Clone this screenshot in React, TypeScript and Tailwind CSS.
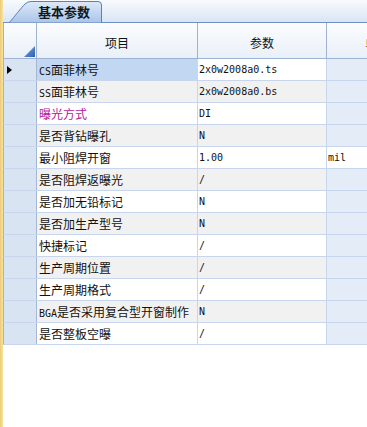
import React from "react";

type Row = { latin?: string; label: string; value: string; unit?: string; magenta?: boolean };

const rows: Row[] = [
  { latin: "CS", label: "面菲林号", value: "2x0w2008a0.ts" },
  { latin: "SS", label: "面菲林号", value: "2x0w2008a0.bs" },
  { label: "曝光方式", value: "DI", magenta: true },
  { label: "是否背钻曝孔", value: "N" },
  { label: "最小阻焊开窗", value: "1.00", unit: "mil" },
  { label: "是否阻焊返曝光", value: "/" },
  { label: "是否加无铅标记", value: "N" },
  { label: "是否加生产型号", value: "N" },
  { label: "快捷标记", value: "/" },
  { label: "生产周期位置", value: "/" },
  { label: "生产周期格式", value: "/" },
  { latin: "BGA", label: "是否采用复合型开窗制作", value: "N" },
  { label: "是否整板空曝", value: "/" },
];

const cjk = { fontFamily: '"Noto Sans CJK SC", "Noto Sans", sans-serif' };
const mono = { fontFamily: '"DejaVu Sans Mono", "Liberation Mono", monospace' };

export default function App() {
  return (
    <div className="w-[367px] h-[427px] bg-white flex overflow-hidden text-[#111]" style={cjk}>
      <div className="w-[3px] shrink-0 bg-gradient-to-r from-[#eccb72] to-[#f7e3a6]" />
      <div className="flex-1 min-w-0 flex flex-col">
        {/* tab strip */}
        <div className="h-[23px] shrink-0 flex border-b border-[#6f90c4] bg-gradient-to-b from-[#f8fafd] to-[#d9e5f5]">
          <div className="ml-[6px] w-[93px] h-full relative">
            <svg className="absolute inset-0" width="93" height="23" viewBox="0 0 93 23">
              <defs>
                <linearGradient id="tabg" x1="0" y1="0" x2="0" y2="1">
                  <stop offset="0" stopColor="#dde9f8" />
                  <stop offset="1" stopColor="#a9c4e9" />
                </linearGradient>
              </defs>
              <path
                d="M0,23 C6,16 12,8 16,4 Q18.5,1.5 22,1.5 L89,1.5 Q92.5,1.5 92.5,5 L92.5,23 Z"
                fill="url(#tabg)"
                stroke="#5d80b6"
                strokeWidth="1"
              />
            </svg>
            <div className="relative pl-[29px] pt-[4px] text-[13px] font-bold leading-[15px] text-[#101820]">基本参数</div>
          </div>
        </div>

        {/* header */}
        <div className="h-[36px] shrink-0 flex border-l border-b border-[#9db3d3] bg-gradient-to-b from-[#fbfcfe] to-[#eaf0f8] text-[12px]">
          <div className="w-[33px] shrink-0 border-r border-[#9fb3cf] relative">
            <svg className="absolute right-[1px] bottom-[1px]" width="11" height="11" viewBox="0 0 11 11">
              <defs>
                <linearGradient id="trig" x1="0" y1="0" x2="1" y2="1">
                  <stop offset="0" stopColor="#7fa6de" />
                  <stop offset="1" stopColor="#2d5fb4" />
                </linearGradient>
              </defs>
              <path d="M11,0 L11,11 L0,11 Z" fill="url(#trig)" />
            </svg>
          </div>
          <div className="w-[161px] shrink-0 border-r border-[#9fb3cf] flex items-center justify-center pt-[4px]">项目</div>
          <div className="w-[129px] shrink-0 border-r border-[#9fb3cf] flex items-center justify-center pt-[4px]">参数</div>
          <div className="w-[100px] shrink-0 flex items-center justify-center pt-[4px] text-[#8a6a20]">单位</div>
        </div>

        {/* rows */}
        {rows.map((r, i) => {
          const odd = i % 2 === 1;
          const base = odd ? "bg-[#f1f1f1]" : "bg-white";
          const itemBg = i === 0 ? "bg-[#c2d8f2]" : base;
          const unitBg = r.unit ? "bg-white" : "bg-[#e4ecf8]";
          return (
            <div key={i} className="h-[22px] shrink-0 flex border-l border-b border-[#c7d6ec] border-l-[#9db3d3] text-[12px] leading-[21px]">
              <div className="w-[33px] shrink-0 border-r border-[#a3b8d6] bg-[#d9e4f3] flex items-center pl-[3px]">
                {i === 0 && (
                  <svg width="5" height="8" viewBox="0 0 5 8">
                    <path d="M0,0 L5,4 L0,8 Z" fill="#000" />
                  </svg>
                )}
              </div>
              <div className={`w-[161px] shrink-0 border-r border-[#c7d6ec] pl-[2px] whitespace-nowrap overflow-hidden ${itemBg} ${r.magenta ? "text-[#b4189c]" : ""}`}>
                {r.latin && (
                  <span className="text-[10px]" style={mono}>
                    {r.latin}
                  </span>
                )}
                {r.label}
              </div>
              <div className={`w-[129px] shrink-0 border-r border-[#c7d6ec] pl-[1px] text-[10px] whitespace-nowrap ${base}`} style={mono}>
                {r.value}
              </div>
              <div className={`w-[100px] shrink-0 pl-[1px] text-[10px] ${unitBg}`} style={mono}>
                {r.unit ?? ""}
              </div>
            </div>
          );
        })}
        <div className="flex-1 bg-white" />
      </div>
    </div>
  );
}
